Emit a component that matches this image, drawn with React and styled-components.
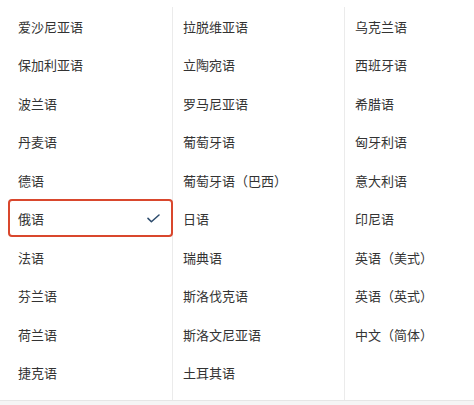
import React from 'react';
import styled, { createGlobalStyle } from 'styled-components';

const GlobalStyle = createGlobalStyle`
  html, body {
    margin: 0;
    padding: 0;
    background: #ffffff;
  }
  body {
    font-family: "Noto Sans CJK SC", "Noto Sans", sans-serif;
  }
`;

const columns = [
    ['爱沙尼亚语', '保加利亚语', '波兰语', '丹麦语', '德语', '俄语', '法语', '芬兰语', '荷兰语', '捷克语'],
    ['拉脱维亚语', '立陶宛语', '罗马尼亚语', '葡萄牙语', '葡萄牙语（巴西）', '日语', '瑞典语', '斯洛伐克语', '斯洛文尼亚语', '土耳其语'],
    ['乌克兰语', '西班牙语', '希腊语', '匈牙利语', '意大利语', '印尼语', '英语（美式）', '英语（英式）', '中文（简体）'],
];

const selected = '俄语';

const Page = styled.div`
  width: 474px;
  height: 405px;
  display: flex;
  flex-direction: column;
  background: #f5f5f5;
`;

const Panel = styled.div`
  height: 401px;
  box-sizing: border-box;
  padding: 6px 0 0 8px;
  display: grid;
  grid-template-columns: 165px 172px 1fr;
  background: #ffffff;
  border-bottom: 1px solid #e6e6e6;
`;

const Column = styled.ul`
  list-style: none;
  margin: 0;
  padding: 0;
  display: flex;
  flex-direction: column;
  border-right: ${p => (p.last ? 'none' : '1px solid #ebebeb')};
  margin-top: 1px;
`;

const Item = styled.li`
  height: 38.5px;
  box-sizing: border-box;
  display: flex;
  align-items: center;
  justify-content: space-between;
  padding: 2px 11px 0 8px;
  margin-right: ${p => (p.active ? '-1px' : '0')};
  border: 2px solid ${p => (p.active ? '#d9472d' : 'transparent')};
  border-radius: 4px;
  font-size: 13px;
  color: #333333;
  white-space: nowrap;
  &:first-child {
    margin-top: -1px;
  }
`;

const Check = () => (
    <svg width="13" height="9" viewBox="0 0 13 9" fill="none">
        <path d="M1 4.4 L4.4 7.8 L12 1" stroke="#2c4b6c" strokeWidth="1.5" strokeLinecap="round" strokeLinejoin="round" />
    </svg>
);

export default function App() {
    return (
        <Page>
            <GlobalStyle />
            <Panel>
                {columns.map((list, i) => (
                    <Column key={i} last={i === columns.length - 1}>
                        {list.map(name => (
                            <Item key={name} active={name === selected}>
                                <span>{name}</span>
                                {name === selected && <Check />}
                            </Item>
                        ))}
                    </Column>
                ))}
            </Panel>
        </Page>
    );
}
